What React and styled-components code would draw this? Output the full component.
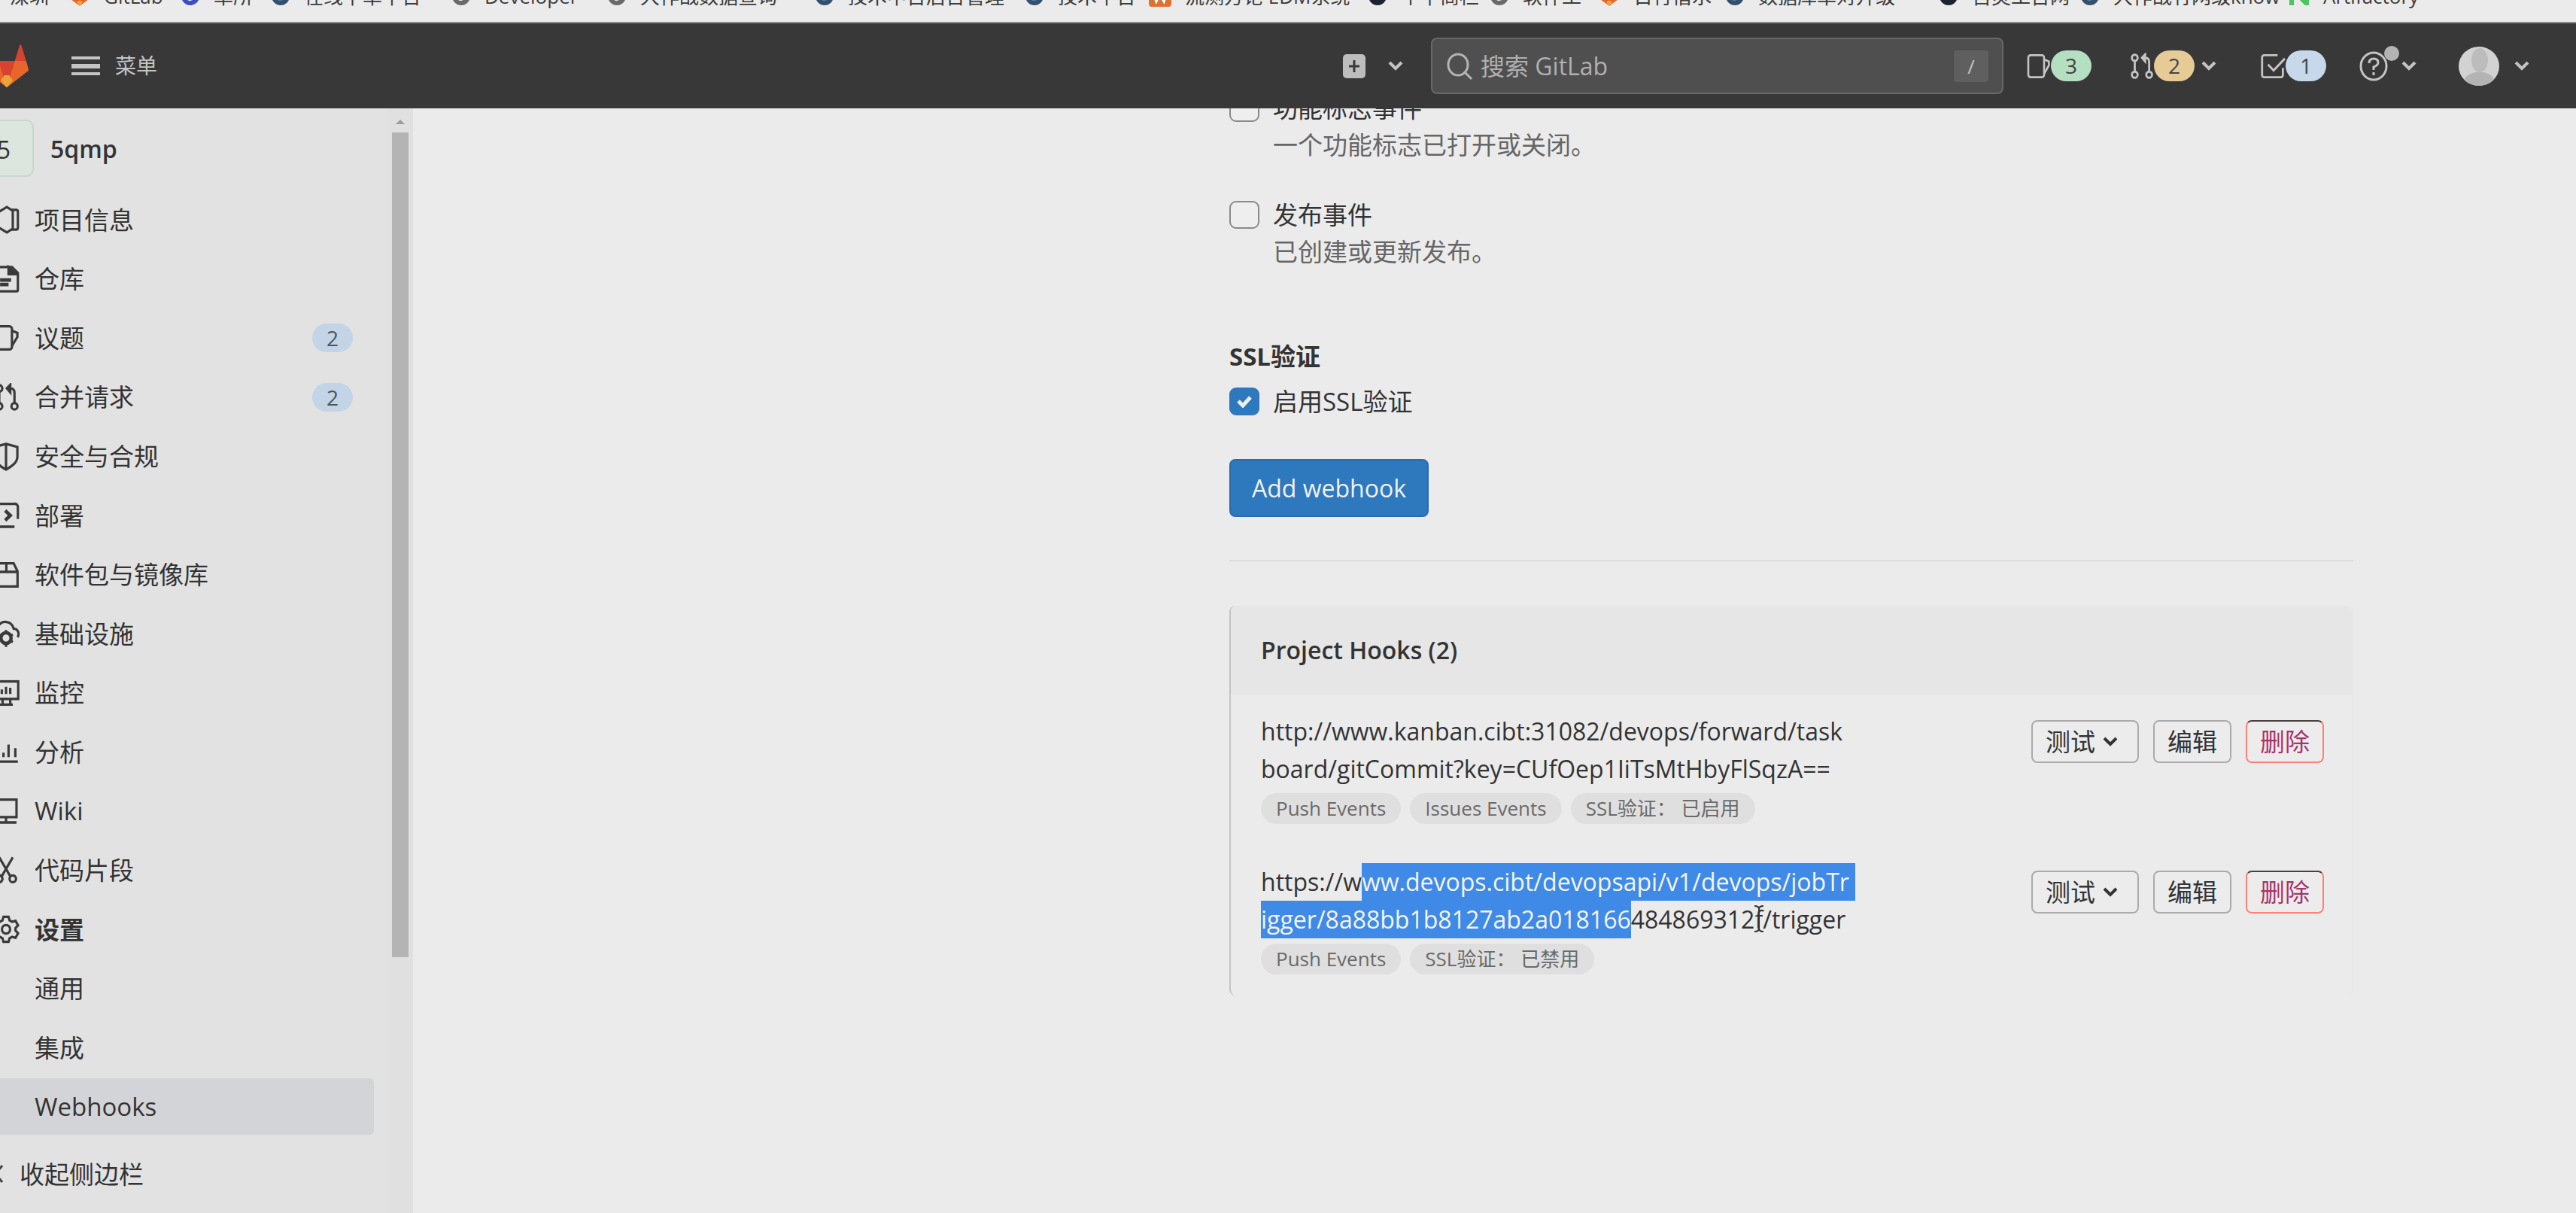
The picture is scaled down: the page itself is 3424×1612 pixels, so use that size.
import React from "react";
import styled, { createGlobalStyle, css } from "styled-components";

const GlobalStyle = createGlobalStyle`
  * { box-sizing: border-box; }
  body {
    margin: 0;
    overflow: hidden;
    background: #ebebeb;
    color: #333;
    font-family: "Open Sans", "Noto Sans CJK SC", sans-serif;
    font-size: 33px;
    line-height: 49px;
  }
  a { color: inherit; text-decoration: none; }
  button, input { font: inherit; color: inherit; }
  svg { display: block; flex: none; }
`;

const Page = styled.div`
  display: flex;
  flex-direction: column;
  height: 100vh;
`;

/* Browser bookmarks */
const Bookmarks = styled.nav`
  display: flex;
  align-items: flex-start;
  flex: none;
  height: 31px;
  padding-left: 13px;
  overflow: hidden;
  border-bottom: 2px solid #8c8c8c;
`;
const Bookmark = styled.a`
  display: flex;
  align-items: center;
  flex: none;
  gap: 18px;
  width: ${(p) => p.$width}px;
  height: 30px;
  margin-top: -20px;
  font-size: 26px;
  line-height: 30px;
  white-space: nowrap;
  color: #3c3c3c;
`;

/* Top bar */
const Topbar = styled.header`
  display: flex;
  align-items: center;
  flex: none;
  height: 113px;
  padding-right: 62px;
  background: #383838;
  color: #c4c4c4;
  overflow: hidden;
`;
const LogoLink = styled.a`
  margin-left: -20px;
`;
const barButton = css`
  display: flex;
  align-items: center;
  padding: 0;
  border: 0;
  background: none;
  color: inherit;
`;
const MenuButton = styled.button`
  ${barButton}
  gap: 20px;
  margin-left: 57px;
  font-size: 28px;
`;
const BarTools = styled.div`
  display: flex;
  align-items: center;
  justify-content: flex-end;
  flex: 1;
`;
const BarButton = styled.button`
  ${barButton}
  margin-left: ${(p) => p.$before || 0}px;
`;
const ChevronSlot = styled.span`
  margin-left: ${(p) => p.$gap}px;
`;
const Search = styled.label`
  display: flex;
  align-items: center;
  flex: 0 1 761px;
  gap: 10px;
  height: 75px;
  margin-left: 36px;
  padding: 0 18px;
  border: 2px solid #686868;
  border-radius: 8px;
  background: #4f4f4f;
`;
const SearchInput = styled.input`
  flex: 1;
  min-width: 0;
  padding: 0;
  border: 0;
  outline: 0;
  background: none;
  font-size: 32px;
  &::placeholder { color: #b0b0b0; opacity: 1; }
`;
const SlashKey = styled.kbd`
  width: 46px;
  height: 42px;
  border-radius: 4px;
  background: #5f5f5f;
  text-align: center;
  font: 26px/42px "Open Sans", sans-serif;
`;
const Count = styled.span`
  width: 54px;
  height: 41px;
  border-radius: 21px;
  background: ${(p) => p.$tone};
  color: #444;
  font-size: 28px;
  line-height: 41px;
  text-align: center;
`;
const HelpMark = styled.span`
  position: relative;
`;
const Dot = styled.span`
  position: absolute;
  top: -6px;
  right: -14px;
  width: 20px;
  height: 20px;
  border-radius: 50%;
  background: #b4b4b4;
`;

/* Sidebar */
const Body = styled.div`
  display: flex;
  flex: 1;
  min-height: 0;
`;
const Sidebar = styled.aside`
  display: flex;
  flex: none;
  width: 549px;
  background: #e2e2e2;
`;
const SideContent = styled.div`
  display: flex;
  flex-direction: column;
  flex: 1;
  min-width: 0;
  overflow: hidden;
`;
const Project = styled.a`
  display: flex;
  align-items: center;
  gap: 22px;
  height: 76px;
  margin: 15px 0 20px -35px;
  font-weight: 600;
  font-size: 32px;
`;
const ProjectAvatar = styled.span`
  width: 80px;
  height: 76px;
  border: 2px solid #ccd4ce;
  border-radius: 10px;
  background: #dce5de;
  font-weight: 400;
  line-height: 76px;
  text-align: center;
`;
const NavList = styled.ul`
  display: grid;
  grid-auto-rows: 1fr;
  gap: 4px;
  flex: 1;
  margin: 0 18px 0 -10px;
  padding: 0;
  list-style: none;
`;
const NavLink = styled.a`
  display: flex;
  align-items: center;
  gap: 20px;
  height: 100%;
  padding-right: 28px;
  border-radius: 6px;
  background: ${(p) => (p.$current ? "#d3d4d7" : "none")};
  font-weight: ${(p) => (p.$bold ? 700 : 400)};
`;
const IconSlot = styled.span`
  width: 36px;
  height: 38px;
  flex: none;
`;
const NavCount = styled.span`
  width: 54px;
  height: 38px;
  margin-left: auto;
  border-radius: 19px;
  background: #c2d4e6;
  color: #4a5560;
  font-size: 28px;
  line-height: 38px;
  text-align: center;
`;
const Collapse = styled.button`
  ${barButton}
  gap: 22px;
  flex: none;
  height: 104px;
  margin-left: -18px;
  color: #333;
`;
const ScrollTrack = styled.div`
  display: flex;
  flex-direction: column;
  align-items: center;
  width: 34px;
  padding: 15px 0 0;
  background: #e0e0e0;
`;
const ScrollArrow = styled.span`
  border: 6px solid transparent;
  border-top: 0;
  border-bottom: 6px solid #9c9c9c;
`;
const ScrollThumb = styled.span`
  width: 22px;
  height: calc(75% + 6px);
  margin-top: 11px;
  background: #b4b4b4;
`;

/* Settings form */
const Main = styled.main`
  display: grid;
  grid-template-columns: minmax(0, 1fr) minmax(0, 2fr);
  gap: 32px;
  flex: 1;
  padding: 0 296px 0 306px;
  overflow: hidden;
`;
const Form = styled.form`
  grid-column: 2;
  display: flex;
  flex-direction: column;
  margin-top: -25px;
`;
const Option = styled.label`
  display: grid;
  grid-template-columns: 40px 1fr;
  column-gap: 18px;
  align-items: center;
  margin-bottom: ${(p) => p.$after}px;
`;
const Tick = styled.input`
  appearance: none;
  grid-area: 1 / 1;
  width: 40px;
  height: 37px;
  margin: 0;
  border: 2px solid #8a8a8a;
  border-radius: 9px;
  background: #eee;
  &:checked { border-color: #2e78bd; background: #2e78bd; }
`;
const TickMark = styled.svg`
  grid-area: 1 / 1;
  justify-self: center;
  pointer-events: none;
  z-index: 1;
`;
const Help = styled.span`
  grid-column: 2;
  color: #666;
`;
const SectionTitle = styled.h4`
  margin: 46px 0 11px;
  font-size: 33px;
  font-weight: 700;
`;
const Primary = styled.button`
  align-self: flex-start;
  height: 77px;
  padding: 0 28px;
  border: 2px solid #2a6cab;
  border-radius: 8px;
  background: #2e78bd;
  color: #f0f0f0;
  font-size: 32px;
`;
const Rule = styled.hr`
  width: 100%;
  height: 2px;
  margin: 57px 0 59px;
  border: 0;
  background: #dcdcdc;
`;
const Card = styled.section`
  border-left: 2px solid #c4c4c4;
  border-right: 2px solid #e7e7e7;
  border-radius: 8px;
`;
const CardHeader = styled.h5`
  margin: 0;
  padding: 0 40px;
  border-radius: 8px 8px 0 0;
  background: #e6e6e6;
  font-size: 32px;
  font-weight: 600;
  line-height: 118px;
`;
const Hook = styled.article`
  display: flex;
  justify-content: space-between;
  align-items: flex-start;
  padding: 24px 37px 28px 40px;
`;
const Url = styled.div`
  font-size: 32px;
  line-height: 50px;
`;
const UrlLine = styled.span`
  display: flex;
  white-space: nowrap;
`;
const Selected = styled.span`
  padding-right: ${(p) => p.$tail || 0}px;
  background: #3f8ae6;
  color: #f4f4f4;
`;
const Pointer = styled.span`
  position: relative;
  width: 0;
  svg { position: absolute; left: -12px; top: 6px; }
`;
const Tags = styled.div`
  display: flex;
  gap: 12px;
  margin-top: 7px;
`;
const Tag = styled.span`
  height: 41px;
  padding: 0 20px;
  border-radius: 21px;
  background: #dfdfdf;
  color: #6a6a6a;
  font-size: 26px;
  line-height: 41px;
  white-space: pre;
`;
const Actions = styled.div`
  display: flex;
  gap: 19px;
  margin-top: 10px;
`;
const Action = styled.button`
  display: flex;
  align-items: center;
  gap: 10px;
  height: 57px;
  padding: 0 ${(p) => (p.$menu ? 26 : 17)}px 0 17px;
  border: 2px solid #ababab;
  border-radius: 8px;
  background: #ececec;
  ${(p) =>
    p.$danger &&
    css`
      border-color: #4a4040 #ff8078 #ff8078;
      color: #a8336c;
    `}
`;

const Chevron = ({ width = 20, stroke = 4 }) => (
  <svg width={width} height="13" viewBox="0 0 20 13" fill="none" stroke="currentColor" strokeWidth={stroke}>
    <path d="M2 2l8 8 8-8" />
  </svg>
);

const Tanuki = ({ width, height }) => (
  <svg width={width} height={height} viewBox="0 0 36 36" preserveAspectRatio="none">
    <path fill="#d8432f" d="M2 14l9.38 9v-9l-4-12.28c-.205-.632-1.176-.632-1.38 0zM34 14l-9.38 9v-9l4-12.28c.205-.632 1.176-.632 1.38 0zM18 34.38L3 14h30z" />
    <path fill="#e8662c" d="M18 34.38L11.38 14H2l4 11zM18 34.38L24.62 14H34l-4 11z" />
    <path fill="#e8662c" d="M2 14L.1 20.16c-.18.565 0 1.2.5 1.56L18 34.38zM34 14l1.9 6.16c.18.565 0 1.2-.5 1.56L18 34.38z" />
    <path fill="#d8432f" d="M11.38 14h13.24L20 28h-4z" />
    <path fill="#eba43a" d="M18 34.38L13 29l3-4h4l3 4z" />
  </svg>
);

const Icon = ({ children }) => (
  <svg width="36" height="38" viewBox="0 0 16 16" preserveAspectRatio="none" fill="none" stroke="#3a3a3a" strokeWidth="1.4">
    {children}
  </svg>
);

const icons = {
  project: <><path d="M8.5.9L12 3v10l-3.5 2.1L3 12V4z" /><path d="M11.5 2.5H14a1 1 0 0 1 1 1v9a1 1 0 0 1-1 1h-2.500" /></>,
  repo: <><path d="M2 1.200h9.500L15 4.500V14a.8.8 0 0 1-.8.8H2z" /><path fill="#3a3a3a" d="M9.500 1.200v4H14z" /><path d="M4.500 8.500h6.500M4.500 11h5" strokeWidth="2" /></>,
  issues: <><rect x="1" y="1.500" width="10.500" height="13" rx="1.500" /><path d="M11.500 4l3.200 1.200v2.300l-3.200 5" /></>,
  merge: <><circle cx="4" cy="3" r="1.800" /><circle cx="4" cy="13" r="1.800" /><circle cx="13" cy="13" r="1.800" /><path d="M4 5v6M13 11V5.500Q13 3 10.500 3H9M10.500 1v4.200L8.500 3z" /></>,
  shield: <path d="M8 .8l6.700 1.700v5.500C14.700 11 12 13 8 15.200 4 13 1.300 11 1.300 8V2.500zM8 1v14" />,
  deploy: <><path d="M13 14.300H3A1.500 1.500 0 0 1 1.500 13V3A1.500 1.500 0 0 1 3 1.500h10A1.700 1.700 0 0 1 15 3.200V10" /><path d="M7.500 5.300L10.500 8l-3 2.700" strokeWidth="2" /></>,
  pack: <><path d="M1.200 6L4 1.500h8.500L14.800 6v8.500H1.200zM1.200 6.300h13.600M8.200 1.500v4.800" /></>,
  infra: <><path d="M3 10.500A3.200 3.200 0 0 1 3.300 4a5 5 0 0 1 9.200 1.200A3 3 0 0 1 14.800 10" /><circle cx="8" cy="10.500" r="3" strokeWidth="2" /><path d="M8 6v2M8 13.500v2M4 8.500l1.300.8M10.700 12l1.300.8M12 8.500l-1.300.8" /></>,
  monitor: <><rect x=".8" y="1.500" width="14.400" height="9.800" /><path d="M5.500 8.500V6M8 8.500V4.500M10.500 8.500V5M6 11.300v3M10.500 11.300v3M4 14.500h8" /></>,
  chart: <path d="M3.500 1v13M3.500 13.500H15M6.500 11V8.500M9.500 11V4M13.500 11V6" />,
  wiki: <path d="M1 1.500h13.200v9.800H1zM8 11.300v3M2 14.300h12.200" />,
  snippet: <><path d="M12 1L5.500 11.500M4 1l6.500 10.500" /><circle cx="4" cy="13" r="1.900" /><circle cx="12" cy="13" r="1.900" /></>,
  gear: <><path d="M6.500 1h3l.6 2 1.500.8 2-.6 1.500 2.600L13.600 7.300v1.400l1.500 1.500-1.500 2.600-2-.6-1.500.8-.6 2h-3l-.6-2-1.500-.8-2 .6L.9 10.200l1.500-1.500V7.300L.9 5.800l1.500-2.600 2 .6L5.900 3z" /><circle cx="8" cy="8" r="2.400" /></>,
};

const BookmarkIcon = ({ kind }) => {
  if (kind === "gitlab") return <Tanuki width={28} height={28} />;
  if (kind === "word")
    return (
      <svg width="30" height="28" viewBox="0 0 30 28">
        <rect width="30" height="28" rx="4" fill="#e0702f" />
        <path d="M6 8l4 12 5-9 5 9 4-12" fill="none" stroke="#fff" strokeWidth="4" />
      </svg>
    );
  if (kind === "nexus")
    return (
      <svg width="28" height="24" viewBox="0 0 28 24">
        <path d="M4 24V2l20 20V0" fill="none" stroke="#4fc45c" strokeWidth="6" />
      </svg>
    );
  const fill = { swirl: "#3a4fc0", navy: "#34506e", dot: "#1c2230", globe: "#6a6a6a" }[kind];
  return (
    <svg width="26" height="26" viewBox="0 0 26 26">
      <circle cx="13" cy="13" r="12" fill={fill} />
      {kind !== "dot" && <path d="M13 7q7 4 3 11-6 3-8-2z" fill={kind === "navy" ? "#5f7f9f" : "#e8e8e8"} />}
    </svg>
  );
};

const bookmarks = [
  [null, "深圳", 79],
  ["gitlab", "GitLab", 148],
  ["swirl", "单所", 120],
  ["navy", "在线下单平台", 240],
  ["globe", "Developer", 207],
  ["globe", "大作战数据查询", 276],
  ["navy", "技术中台后台管理", 279],
  ["navy", "技术平台", 165],
  ["word", "流测方论  EDM系统", 291],
  ["dot", "个下商栏", 162],
  ["globe", "软件工", 145],
  ["gitlab", "日行借水", 168],
  ["navy", "数据库单对升级", 284],
  ["dot", "百灵工台网", 188],
  ["navy", "大作战竹网级know", 277],
  ["nexus", "Artifactory", 180],
];

const nav = [
  ["project", "项目信息"],
  ["repo", "仓库"],
  ["issues", "议题", 2],
  ["merge", "合并请求", 2],
  ["shield", "安全与合规"],
  ["deploy", "部署"],
  ["pack", "软件包与镜像库"],
  ["infra", "基础设施"],
  ["monitor", "监控"],
  ["chart", "分析"],
  ["wiki", "Wiki"],
  ["snippet", "代码片段"],
  ["gear", "设置"],
  [null, "通用"],
  [null, "集成"],
  [null, "Webhooks"],
];

const HookRow = ({ url, tags }) => (
  <Hook>
    <div>
      <Url>{url}</Url>
      <Tags>{tags.map((t) => <Tag key={t}>{t}</Tag>)}</Tags>
    </div>
    <Actions>
      <Action type="button" $menu aria-haspopup="menu">测试<Chevron /></Action>
      <Action type="button">编辑</Action>
      <Action type="button" $danger>删除</Action>
    </Actions>
  </Hook>
);

const BarIcon = ({ children, width = 34 }) => (
  <svg width={width} height="36" viewBox="0 0 16 16" preserveAspectRatio="none" fill="none" stroke="#c4c4c4" strokeWidth="1.300">
    {children}
  </svg>
);

export default function App() {
  return (
    <Page>
      <GlobalStyle />
      <Bookmarks aria-label="书签">
        {bookmarks.map(([kind, text, width]) => (
          <Bookmark key={text} href="#" $width={width}>
            {kind && <BookmarkIcon kind={kind} />}
            {text}
          </Bookmark>
        ))}
      </Bookmarks>

      <Topbar>
        <LogoLink href="#" aria-label="GitLab"><Tanuki width={58} height={62} /></LogoLink>
        <MenuButton type="button">
          <svg width="38" height="28" viewBox="0 0 38 28" fill="#c4c4c4">
            <path d="M0 1h38v4H0zM0 11h38v6H0zM0 22h38v4H0z" />
          </svg>
          菜单
        </MenuButton>
        <BarTools>
          <BarButton type="button" aria-label="新建">
            <svg width="30" height="32" viewBox="0 0 30 32">
              <rect width="30" height="32" rx="5" fill="#bdbdbd" />
              <path d="M15 8v16M8 16h14" stroke="#383838" strokeWidth="3" />
            </svg>
            <ChevronSlot $gap={29}><Chevron width={22} /></ChevronSlot>
          </BarButton>
          <Search>
            <svg width="36" height="38" viewBox="0 0 36 38" fill="none" stroke="#b4b4b4" strokeWidth="3">
              <ellipse cx="16" cy="17" rx="13" ry="14" />
              <path d="M25 27l9 9" />
            </svg>
            <SearchInput type="search" aria-label="搜索" placeholder="搜索 GitLab" />
            <SlashKey>/</SlashKey>
          </Search>
          <BarButton type="button" aria-label="议题" $before={31}>
            <BarIcon width={32}>{icons.issues}</BarIcon>
            <Count $tone="#b5dfc1">3</Count>
          </BarButton>
          <BarButton type="button" aria-label="合并请求" $before={49}>
            <BarIcon>{icons.merge}</BarIcon>
            <Count $tone="#e6cb96">2</Count>
            <ChevronSlot $gap={9}><Chevron /></ChevronSlot>
          </BarButton>
          <BarButton type="button" aria-label="待办事项" $before={58}>
            <BarIcon>
              <path d="M11 1.500H2.500a1.200 1.200 0 0 0-1.200 1.200v10.600a1.200 1.200 0 0 0 1.200 1.200h10.600a1.200 1.200 0 0 0 1.200-1.200V9M5 7l3.500 3.500L15.500 3.500" />
            </BarIcon>
            <Count $tone="#c6d8ea">1</Count>
          </BarButton>
          <BarButton type="button" aria-label="帮助" $before={43}>
            <HelpMark>
              <svg width="40" height="42" viewBox="0 0 40 42" fill="none" stroke="#c4c4c4" strokeWidth="3">
                <ellipse cx="20" cy="21" rx="17" ry="18" />
                <path d="M14 17q0-6 6-6t6 5q0 4-6 6v4M20 29v4" />
              </svg>
              <Dot />
            </HelpMark>
            <ChevronSlot $gap={17}><Chevron /></ChevronSlot>
          </BarButton>
          <BarButton type="button" aria-label="用户" $before={56}>
            <svg width="54" height="52" viewBox="0 0 54 52">
              <clipPath id="face"><ellipse cx="27" cy="26" rx="27" ry="26" /></clipPath>
              <g clipPath="url(#face)">
                <rect width="54" height="52" fill="#d2d2d2" />
                <ellipse cx="28" cy="18" rx="11" ry="16" fill="#bcbcbc" />
                <path d="M4 52q3-15 18-18h12q14 4 17 18z" fill="#b4b4b4" />
              </g>
            </svg>
            <ChevronSlot $gap={20}><Chevron /></ChevronSlot>
          </BarButton>
        </BarTools>
      </Topbar>

      <Body>
        <Sidebar>
          <SideContent>
            <Project href="#"><ProjectAvatar>5</ProjectAvatar>5qmp</Project>
            <NavList>
              {nav.map(([icon, text, count]) => (
                <li key={text}>
                  <NavLink href="#" $bold={icon === "gear"} $current={text === "Webhooks"}>
                    <IconSlot>{icon && <Icon>{icons[icon]}</Icon>}</IconSlot>
                    {text}
                    {count && <NavCount>{count}</NavCount>}
                  </NavLink>
                </li>
              ))}
            </NavList>
            <Collapse type="button">
              <svg width="22" height="26" viewBox="0 0 22 26" fill="none" stroke="#444" strokeWidth="3">
                <path d="M10 2L1 13l9 11M21 2l-9 11 9 11" />
              </svg>
              收起侧边栏
            </Collapse>
          </SideContent>
          <ScrollTrack>
            <ScrollArrow />
            <ScrollThumb />
          </ScrollTrack>
        </Sidebar>

        <Main>
          <Form>
            <Option $after={44}>
              <Tick type="checkbox" />
              <span>功能标志事件</span>
              <Help>一个功能标志已打开或关闭。</Help>
            </Option>
            <Option $after={44}>
              <Tick type="checkbox" />
              <span>发布事件</span>
              <Help>已创建或更新发布。</Help>
            </Option>
            <SectionTitle>SSL验证</SectionTitle>
            <Option $after={52}>
              <Tick type="checkbox" defaultChecked />
              <TickMark width="20" height="16" viewBox="0 0 20 16" fill="none" stroke="#eee" strokeWidth="5">
                <path d="M2 7l6 6L18 2" />
              </TickMark>
              <span>启用SSL验证</span>
            </Option>
            <Primary type="button">Add webhook</Primary>
            <Rule />
            <Card>
              <CardHeader>Project Hooks (2)</CardHeader>
              <HookRow
                url={
                  <>
                    <UrlLine>http://www.kanban.cibt:31082/devops/forward/task</UrlLine>
                    <UrlLine>board/gitCommit?key=CUfOep1IiTsMtHbyFlSqzA==</UrlLine>
                  </>
                }
                tags={["Push Events", "Issues Events", "SSL验证： 已启用"]}
              />
              <HookRow
                url={
                  <>
                    <UrlLine>https://w<Selected $tail={8}>ww.devops.cibt/devopsapi/v1/devops/jobTr</Selected></UrlLine>
                    <UrlLine>
                      <Selected>igger/8a88bb1b8127ab2a018166</Selected>484869312f
                      <Pointer>
                        <svg width="14" height="36" viewBox="0 0 14 36" fill="none" stroke="#333" strokeWidth="2">
                          <path d="M1 1q6 0 6 4v26q0 4-6 4M13 1q-6 0-6 4M13 35q-6 0-6-4" />
                        </svg>
                      </Pointer>
                      /trigger
                    </UrlLine>
                  </>
                }
                tags={["Push Events", "SSL验证： 已禁用"]}
              />
            </Card>
          </Form>
        </Main>
      </Body>
    </Page>
  );
}
